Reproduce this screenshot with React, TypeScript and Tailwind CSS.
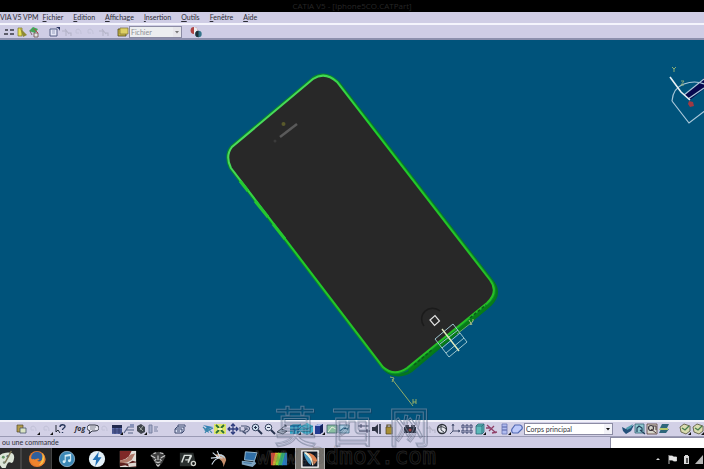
import type { ReactNode } from "react";
import clsx from "clsx";

const MENUS = ["VIA V5 VPM", "Fichier", "Edition", "Affichage", "Insertion", "Outils", "Fenêtre", "Aide"];

// 12x12 toolbar glyphs
const GLYPHS: Record<string, ReactNode> = {
  Measure: <path d="M1 4h3M6 4h4M0 8h4M6 8h4" stroke="#3a3a44" strokeWidth="1.4" />,
  Ruler: (
    <>
      <path d="M2 2h4v8H2z" fill="#e6df55" stroke="#77722a" strokeWidth=".7" />
      <path d="M4 2l7 7-4 2z" fill="#8f8a34" />
    </>
  ),
  Catalogue: (
    <>
      <path d="M1 5l4-4 5 2-3 4z" fill="#45a456" />
      <path d="M2 5l2 4M6 7h4v4H6z" stroke="#6d4c4c" fill="#e3e6e1" strokeWidth=".8" />
      <path d="M6 3l4 4" stroke="#b8474a" />
    </>
  ),
  Sketch: (
    <>
      <path d="M2 3h7v7H2z" fill="#e3e6f5" stroke="#545f85" />
      <path d="M4 5h3M4 7h3" stroke="#9aa2c0" />
      <path d="M8 1h4v4l-1-2z" fill="#26315e" />
    </>
  ),
  Ghost: <path d="M2 5h4v5M5 3l4 5M8 7h3v3" stroke="#b4b4c8" strokeWidth="1.1" fill="none" />,
  Faint: <path d="M3 4c3-2 5 0 5 4M3 4v3h3" stroke="#c2c2d8" fill="none" />,
  Folder: (
    <>
      <path d="M1 3h8v7H1z" fill="#c5b545" stroke="#514a22" strokeWidth=".8" />
      <path d="M3 2h8v6H3z" fill="#ddcf65" stroke="#7c7134" strokeWidth=".7" />
    </>
  ),
  Balls: (
    <>
      <circle cx="4" cy="4.500" r="3.400" fill="#af4342" />
      <path d="M4 1.100a3.400 3.400 0 0 1 0 6.800z" fill="#eceef0" />
      <circle cx="8.500" cy="8" r="3.200" fill="#347489" />
      <path d="M8.500 4.800a3.200 3.200 0 0 0 0 6.400z" fill="#1d3038" />
    </>
  ),
  Paste: (
    <>
      <path d="M2 2h6v7H2z" fill="#b39b4c" stroke="#544b2c" strokeWidth=".7" />
      <path d="M5 5h6v5H5z" fill="#d9e3c4" stroke="#49566c" strokeWidth=".8" />
    </>
  ),
  Help: (
    <>
      <path d="M2 2v7l2-2 2 3" stroke="#222733" fill="none" />
      <path d="M6 4c0-3 5-3 5-.5C11 5 8.500 5 8.500 7M8.500 9v1" stroke="#253559" fill="none" strokeWidth="1.400" />
    </>
  ),
  Bubble: (
    <>
      <path d="M2 2h6q4 0 4 3t-5 3H5l-3 3 1-3Q0 7 0 5t2-3z" fill="#e8e8f2" stroke="#333745" />
      <path d="M3 4h6M3 6h5" stroke="#6a6e7c" strokeWidth=".8" />
    </>
  ),
  Table: (
    <>
      <path d="M1 2h10v9H1z" fill="#5a68a4" />
      <path d="M1 2h10v3H1z" fill="#20294e" />
      <path d="M1 7h10M1 9h10M4 5v6M8 5v6" stroke="#2b3563" strokeWidth=".7" />
    </>
  ),
  Tree: (
    <>
      <path d="M1 10l4-6h6M3 7h8M5 10h5" stroke="#5b6688" fill="none" strokeWidth="1.200" />
      <path d="M7 1h4v3H7z" fill="#8792b9" />
    </>
  ),
  Knot: (
    <>
      <path d="M2 3l4-2 4 3v5l-4 2-4-3z" fill="#3f444b" />
      <path d="M4 4l4 4M8 3L5 7" stroke="#b4bbb6" strokeWidth=".8" />
    </>
  ),
  Lines: <path d="M2 2h3v8H2zM7 4h4M7 6h3M7 8h4" fill="#a9afcb" stroke="#737b9c" strokeWidth=".9" />,
  Box: <path d="M1 6l2-2h7v4l-2 2H1zM1 6h7v4M4 4V2h7v2M3 8h3" fill="#d6dcf0" stroke="#3d496f" />,
  Fly: (
    <>
      <path d="M1 2l10 2-4 2zM2 7l3-3 2 6" fill="#3482b5" />
      <path d="M1 4l4 4 6-3M3 10l3-5 4 5" stroke="#3a87ab" fill="none" strokeWidth="1.200" />
    </>
  ),
  FitAll: (
    <>
      <path d="M0 1h12v10H0z" fill="#dce66a" />
      <path d="M2 2l3 3M10 2L7 5M2 10l3-3M10 10L7 7" stroke="#2b6e38" strokeWidth="1.800" />
      <path d="M4 5h4v2H4z" fill="#edf2a8" />
    </>
  ),
  Pan: <path d="M6 1v10M1 6h10M4 3l2-2 2 2M4 9l2 2 2-2M3 4L1 6l2 2M9 4l2 2-2 2" stroke="#2d3c7d" fill="none" strokeWidth="1.300" />,
  Rotate: <path d="M2 3h5q5 1 3 4t-5 2M7 6L4 9l3 2M1 4v4h3M5 5h3v2" stroke="#495474" fill="none" strokeWidth="1.100" />,
  ZoomIn: (
    <>
      <circle cx="4.500" cy="4.500" r="3.300" fill="#cfe2f0" stroke="#33405d" />
      <path d="M7 7l4 4" stroke="#26314e" strokeWidth="2" />
      <path d="M3 4.500h3M4.500 3v3" stroke="#26314e" />
    </>
  ),
  ZoomOut: (
    <>
      <circle cx="4.500" cy="4.500" r="3.300" fill="#e0e8f3" stroke="#33405d" />
      <path d="M7 7l4 4" stroke="#26314e" strokeWidth="2" />
      <path d="M3 4.500h3" stroke="#26314e" />
    </>
  ),
  Normal: <path d="M1 9l4-3 6 2-4 3zM5 6l5-4M8 2h2v2" fill="#9ca6b9" stroke="#4d5566" />,
  Views: (
    <>
      <path d="M1 3l3-2h8v7l-3 3H1z" fill="#30aaca" />
      <path d="M1 3h8v8M9 3l3-2M1 7h8l3-3M5 3v8" stroke="#15508a" fill="none" strokeWidth=".9" />
    </>
  ),
  Iso: (
    <>
      <path d="M6 0l6 3v6l-6 3-6-3V3z" fill="#45b2cc" />
      <path d="M0 3l6 3 6-3M6 6v6M3 5v6M9 5v6" stroke="#28678c" fill="none" strokeWidth=".8" />
    </>
  ),
  Shaded: (
    <>
      <path d="M2 3l3-2h5v8l-3 2H2z" fill="#243b91" />
      <path d="M2 3l3-2h5L7 3z" fill="#a4b6e7" />
      <path d="M7 3l3-2v8l-3 2z" fill="#14225c" />
    </>
  ),
  Hide: (
    <>
      <path d="M1 2h10v8H1z" fill="#8abfa2" stroke="#3f6370" strokeWidth=".8" />
      <path d="M2 9l4-5 4 2" stroke="#e6eddb" fill="none" />
    </>
  ),
  Swap: (
    <>
      <path d="M1 2h10v8H1z" fill="#a9cce2" stroke="#386581" strokeWidth=".8" />
      <path d="M2 8l4-3 4 1" stroke="#246183" fill="none" strokeWidth="1.400" />
    </>
  ),
  Axis: <path d="M0 3h11M1 8h11M3 1v4M9 6v4" stroke="#454b68" />,
  Speaker: (
    <>
      <path d="M1 4h3l3-3v10L4 8H1z" fill="#303545" />
      <path d="M8 1h2v10H8z" fill="#4e5468" />
    </>
  ),
  Lock: (
    <>
      <path d="M4 5V2h4v3" fill="none" stroke="#564c27" strokeWidth="1.200" />
      <path d="M3 4h6v7H3z" fill="#a88f35" stroke="#514420" strokeWidth=".7" />
    </>
  ),
  Camera: (
    <>
      <path d="M0 4h12v6H0z" fill="#2f3342" />
      <path d="M1 2h4v2H1zM7 2h4v2H7z" fill="#4d5060" />
      <circle cx="6" cy="7" r="1.500" fill="#9e4242" />
    </>
  ),
  Clock: (
    <>
      <circle cx="6" cy="6" r="4.500" fill="#e5e7ee" stroke="#2b2f38" strokeWidth="1.300" />
      <path d="M2 5q4-3 8 1M5 2v5l3 2" stroke="#2b2f38" fill="none" strokeWidth=".9" />
    </>
  ),
  Frame: <path d="M4 1v7h7M4 8l-3 3M3 3l1-2 1 2M9 7l2 1-2 1" stroke="#4a5372" fill="none" />,
  Digits: <path d="M1 2h2v3H1zM5 2h2v3H5zM9 2h2v3H9zM1 7h2v3H1zM5 7h2v3H5zM9 7h2v3H9z" stroke="#3d4770" fill="none" />,
  Solid: (
    <>
      <path d="M2 3l2-2h6v8l-2 2H2z" fill="#5bb9b9" stroke="#286573" strokeWidth=".8" />
      <path d="M2 3h6v8M8 3l2-2" stroke="#286573" fill="none" strokeWidth=".8" />
    </>
  ),
  Cut: <path d="M1 2l9 8M3 8l5-5M0 5h5M6 10l5-1" stroke="#8f4068" fill="none" strokeWidth="1.300" />,
  Stack: <path d="M3 1h5v3H3zM3 4h5v3H3zM3 7h5v4H3z" fill="#b1bcf0" stroke="#6874b3" strokeWidth=".8" />,
  Plane: <path d="M4 2h5q3 1 2 4L7 10H2Q0 9 1 6z" fill="#bdc9fa" stroke="#5068b2" strokeWidth="1.200" />,
  Layer: (
    <>
      <path d="M0 4l4 2 8-4-3 6-5 3-3-3z" fill="#22507a" />
      <path d="M4 5l7-4-2 4-4 2z" fill="#519caf" />
    </>
  ),
  Find: (
    <>
      <path d="M1 1h9v9H1z" fill="#8fc7cf" stroke="#365f73" strokeWidth=".8" />
      <path d="M3 9V5l2-2 3 2v4M6 7l5 4" stroke="#22405c" fill="none" strokeWidth="1.200" />
    </>
  ),
  Gear: (
    <>
      <path d="M1 1h10v10H1z" fill="#d6d5cb" stroke="#583c3b" strokeWidth=".8" />
      <circle cx="5" cy="5" r="2.500" fill="none" stroke="#3c363e" strokeWidth="1.200" />
      <path d="M5 6l5 4M7 3h3v4" stroke="#4d3b3e" fill="none" />
    </>
  ),
  Slab: (
    <>
      <path d="M4 1h7L9 5H2zM3 6h8l-3 4H1z" fill="#2e667b" />
      <path d="M2 5h8v2H1z" fill="#b6c66b" />
    </>
  ),
  Part: (
    <>
      <path d="M1 4l4-3 6 2v5l-4 3-5-2z" fill="#d9dcaf" stroke="#605f46" strokeWidth=".9" />
      <path d="M3 5l3 2 4-4" stroke="#477d4c" strokeWidth="1.300" fill="none" />
    </>
  ),
};

function Tool({ name, more }: { name: string; more?: boolean }) {
  return (
    <button type="button" aria-label={name} className="block h-3 w-3 shrink-0">
      <svg viewBox="0 0 12 12" className="h-3 w-3" fill="none">
        {GLYPHS[name]}
        {more && <path d="M9 12h3V9z" fill="#111" />}
      </svg>
    </button>
  );
}

function ToolGroup({ names, more = [], className }: { names: string[]; more?: number[]; className?: string }) {
  return (
    <div className={clsx("flex shrink-0 items-center justify-between", className)}>
      {names.map((n, i) => (
        <Tool key={i} name={n} more={more.includes(i)} />
      ))}
    </div>
  );
}

function DropDown({ label, value, className, muted }: { label: string; value: string; className?: string; muted?: boolean }) {
  return (
    <div className={clsx("relative shrink-0", className)}>
      <select
        aria-label={label}
        className={clsx(
          "block h-3 w-full appearance-none border border-[#8c8ca4] pl-px text-[7px] leading-[10px]",
          muted ? "bg-[#eceef0] text-[#8c8e94]" : "bg-white text-[#34343c]",
        )}
      >
        <option>{value}</option>
      </select>
      <svg viewBox="0 0 8 10" className="pointer-events-none absolute right-px top-px h-2.5 w-2">
        <path d="M0 0h8v10H0z" fill={muted ? "#e6e6ea" : "#f2f2f8"} />
        <path d="M2 4h4L4 6.500z" fill={muted ? "#777" : "#111"} />
      </svg>
    </div>
  );
}

const PHONE = "M232 147L313 79Q325 71 337 82L490 280Q499 292 487 303L407 368Q394 377 383 367L231 168Q225 156 232 147Z";

function Viewport() {
  return (
    <svg viewBox="0 40 704 380" preserveAspectRatio="xMidYMid slice" className="absolute inset-0 h-full w-full" fill="none">
      <defs>
        <linearGradient id="edge" x1="230" y1="100" x2="490" y2="340" gradientUnits="userSpaceOnUse">
          <stop offset="0" stopColor="#5be070" />
          <stop offset=".35" stopColor="#20cf2a" />
          <stop offset="1" stopColor="#27bd24" />
        </linearGradient>
      </defs>

      {/* phone body */}
      <path d="M338 82L492 281Q502 293 490 305L411 371Q396 380 384 369" stroke="#04761f" strokeWidth="3" />
      <path d="M491 282Q499 295 487 306L408 370" stroke="#087c18" strokeWidth="5" />
      <path d={PHONE} stroke="#0b8a2b" strokeWidth="4" />
      <path d={PHONE} fill="#282828" stroke="url(#edge)" strokeWidth="2" />
      <path d="M240 181l8 10M255 201l13 16M273 224l12 15" stroke="#25c731" strokeWidth="3" />
      <path d="M414 365l18-15M470 318l16-13" stroke="#0a5a19" strokeWidth="1.500" strokeDasharray="3 2" />

      {/* earpiece and sensors */}
      <path d="M280 137l17-13" stroke="#5a5a5a" strokeWidth="2.500" />
      <circle cx="283.500" cy="124" r="2" fill="#59592b" />
      <circle cx="275" cy="141" r="1.500" fill="#3b3b3b" />

      {/* home button */}
      <path d="M424 326a11 11 0 0 1 16-15" stroke="#1b1b1b" strokeWidth="1.500" />
      <path d="M430 320l5-4.500 4.500 5.500-5 4.500z" stroke="#e2e2e2" strokeWidth="1.200" />

      {/* sketch planes */}
      <path d="M435 339l18-15 14 18-18 15zM442 348l18-15M440 344l18-14M446 353l18-15" stroke="#9cc5cf" />
      <path d="M442 329l17 22" stroke="#e2edc1" strokeWidth="1.400" />
      <path d="M457 334l14-11" stroke="#6fa76f" />
      <path d="M469 320l3 5M470 325l3-4M472 320h2" stroke="#a9bc87" />
      <path d="M392 379l21 27M390 377l4 1-2 4M413 399v5M416 399v5M413 402h3" stroke="#a3b765" strokeWidth=".9" />

      {/* compass */}
      <path d="M684 95L704 78V89L690 100Z" fill="#07094e" />
      <path d="M672 101Q673 88 684 84T704 84M672 101L689 123L706 110M684 95L704 79M688 99L704 88" stroke="#a9c8da" strokeWidth="1.200" />
      <path d="M670 77l11 15 9 8" stroke="#e9f1f4" strokeWidth="1.600" />
      <path d="M689 101l4 1 1 4-4 1-2-3z" fill="#a03943" />
      <path d="M672 67l2 2 2-2M674 69v3" stroke="#9bb874" strokeWidth=".9" />
      <path d="M681 81h3l-3 4h3" stroke="#8dac7b" strokeWidth=".9" />
    </svg>
  );
}

// 20x20 taskbar drawings
const APPS: { name: string; art: ReactNode; state?: "open" | "active" }[] = [
  {
    name: "Paint",
    state: "open",
    art: (
      <>
        <path d="M1 13Q0 4 10 3t9 6-4 5-5 5-9-6z" fill="#dce5d8" />
        <circle cx="7" cy="8" r="1.600" fill="#609264" />
        <circle cx="12" cy="7" r="1.500" fill="#60727d" />
        <circle cx="8" cy="14" r="1.500" fill="#7c8a78" />
        <path d="M16 1L9 14" stroke="#7d7654" strokeWidth="1.500" />
      </>
    ),
  },
  {
    name: "Firefox",
    state: "open",
    art: (
      <>
        <circle cx="10" cy="10" r="9" fill="#e4782b" />
        <circle cx="10" cy="8.500" r="6.500" fill="#2e5f9d" />
        <path d="M2 6q1 5 4 4 1 1 3 0 2-1 4 0-1 2-3 2 4 2 6-2 2-5 0-7 6 6 2 12-5 5-11 2-6-4-5-11z" fill="#ee842d" />
        <path d="M16 3q4 6 0 12-2 2-4 2 5-5 4-14z" fill="#f6c14b" />
      </>
    ),
  },
  {
    name: "iTunes",
    art: (
      <>
        <circle cx="10" cy="10" r="8.500" fill="#3b87b5" stroke="#8cabc1" />
        <path d="M8 13V6l6-1v7M8 7l6-1" stroke="#d4edf7" strokeWidth="1.200" fill="none" />
        <circle cx="6.700" cy="13" r="1.600" fill="#d4edf7" />
        <circle cx="12.700" cy="12" r="1.600" fill="#d4edf7" />
      </>
    ),
  },
  {
    name: "Daemon Tools",
    art: (
      <>
        <circle cx="10" cy="10" r="9" fill="#e3f0f7" />
        <path d="M12 2L5 11h4l-1 7 7-10h-4z" fill="#2371b5" />
      </>
    ),
  },
  {
    name: "Red picture",
    art: (
      <>
        <path d="M1 1h18v18H1z" fill="#e2ded8" />
        <path d="M1 1h13l-3 6-4 3-6 2z" fill="#7f2927" />
        <path d="M1 12l7-2 5-5 5-1-4 7-5 3-8 1z" fill="#b07a6a" />
        <path d="M1 14l9 1 5-3 4 1v6h-7l-5-2-6 1z" fill="#5e2220" />
        <path d="M10 15l9-1v4l-8 1z" fill="#dcd6d0" />
      </>
    ),
  },
  {
    name: "Mask",
    art: (
      <>
        <path d="M2 5l4-2 5-1 6 3 1 3-3 6-4 5-4-4-3-5z" fill="#3e3e3e" />
        <path d="M2 6l5 3M18 6l-5 3M7 13l3 1 3-1M8 16l2 2 2-2M5 4l3-1M12 3l4 1M8 10l-2 2M12 10l2 2M10 6v5" stroke="#c9c9c9" strokeWidth="1.300" fill="none" />
      </>
    ),
  },
  {
    name: "Converter",
    art: (
      <>
        <path d="M1 3h15l2 9-4 6H1z" fill="#2b302f" />
        <path d="M3 14L6 6h7l-2 5H7M10 14l4-8" stroke="#dde2df" strokeWidth="1.600" fill="none" />
        <circle cx="16" cy="15" r="2.300" fill="none" stroke="#d2d5ce" strokeWidth="1.500" />
      </>
    ),
  },
  {
    name: "Swoosh",
    art: (
      <>
        <path d="M6 5Q17 3 18 11l-3 8q0-8-8-11z" fill="#c58f6c" />
        <path d="M8 5q8-1 9 5-3-3-9-5z" fill="#b5d4e8" />
        <path d="M2 16q5-9 12-7M3 3l7 6M8 1l3 7M1 9l9-1" stroke="#d5e2ee" strokeWidth="1.200" fill="none" />
      </>
    ),
  },
  {
    name: "Computer",
    art: (
      <>
        <path d="M6 2l13 1-3 9-11-1z" fill="#2f6fa8" stroke="#9fc3da" />
        <path d="M2 12l12 1 2-1 2 3-4 4-12-3z" fill="#7fa4c0" />
        <path d="M4 14l9 1M8 4l8 1" stroke="#386f9f" />
      </>
    ),
  },
  {
    name: "Spectrum",
    art: (
      <>
        <path d="M1 3h6L4 17H1z" fill="#d44937" />
        <path d="M6 3h4L6 17H3z" fill="#ddb82d" />
        <path d="M9 3h5l-4 14H6z" fill="#83d636" />
        <path d="M13 3h5l-4 14H9z" fill="#2db475" />
        <path d="M17 3h2v14h-6z" fill="#2878c1" />
      </>
    ),
  },
  {
    name: "CATIA",
    state: "active",
    art: (
      <>
        <path d="M1 1h18v18H1z" fill="#0d1420" />
        <path d="M3 3q8 0 9 6l-1 8Q4 11 3 3z" fill="#4f9cc4" />
        <path d="M7 3q9 1 11 9l-4 5Q13 8 7 3z" fill="#dd8250" />
        <path d="M6 3q7 5 7 14-1-8-9-14z" fill="#fbf1d5" stroke="#fbf1d5" />
        <path d="M1 1h18v18H1z" fill="none" stroke="#fff" strokeWidth="1.500" />
      </>
    ),
  },
];

export default function App() {
  return (
    <div className="relative flex min-h-screen flex-col overflow-hidden bg-black font-['Lato','Noto_Sans',sans-serif] text-[7px] text-[#2c2c36]">
      <header className="flex h-3 shrink-0 items-center justify-center bg-black font-['Open_Sans',sans-serif] text-[8px] leading-3 text-[#262626]">
        CATIA V5 - [Iphone5CO.CATPart]
      </header>

      <nav className="flex h-[13px] shrink-0 items-center gap-2.5 border-b-2 border-[#f4f4fc] bg-[#cfcde5]">
        {MENUS.map((m, i) => (
          <button key={m} type="button" className={clsx("whitespace-nowrap leading-[11px]", i === 0 && "-mr-1.5")}>
            {i === 0 ? m : (
              <>
                <span className="underline">{m[0]}</span>
                {m.slice(1)}
              </>
            )}
          </button>
        ))}
      </nav>

      <div className="flex h-[15px] shrink-0 items-center border-b-2 border-[#8d90ad] bg-[#cfcde5]">
        <ToolGroup names={["Measure", "Ruler", "Catalogue"]} className="ml-1 w-9" />
        <ToolGroup names={["Sketch", "Ghost", "Faint", "Faint", "Ghost"]} className="ml-2 w-[61px]" />
        <ToolGroup names={["Folder"]} className="ml-2" />
        <DropDown label="Type" value="Fichier" muted className="w-[53px]" />
        <ToolGroup names={["Balls"]} className="ml-2" />
      </div>

      <main className="relative min-h-[200px] flex-1 bg-[#00537b]">
        <Viewport />
      </main>

      <div className="flex h-[17px] shrink-0 items-center border-b border-t-2 border-b-[#9a9ab4] border-t-[#f2f2fa] bg-[#d2d0e6]">
        <ToolGroup names={["Paste", "Faint", "Faint", "Help"]} more={[1, 2]} className="ml-[15px] w-[51px]" />
        <div className="ml-2 flex w-[84px] shrink-0 items-center justify-between">
          <button type="button" className="w-3 font-['Open_Sans',sans-serif] text-[7px] font-bold italic leading-3">fog</button>
          <ToolGroup names={["Bubble", "Faint", "Table", "Tree", "Knot", "Lines"]} more={[2, 4]} className="w-[71px]" />
        </div>
        <ToolGroup names={["Box"]} className="ml-4" />
        <div className="ml-[8px] h-3 w-px bg-[#b2b2c8]" />
        <ToolGroup
          names={["Fly", "FitAll", "Pan", "Rotate", "ZoomIn", "ZoomOut", "Normal", "Views", "Iso", "Shaded", "Hide", "Swap"]}
          more={[7, 8, 9]}
          className="ml-[8px] w-[148px]"
        />
        <ToolGroup names={["Axis", "Speaker", "Lock"]} className="ml-2 w-[37px]" />
        <ToolGroup names={["Camera"]} className="ml-[9px]" />
        <ToolGroup
          names={["Ghost", "Clock", "Frame", "Digits", "Solid", "Cut", "Stack", "Plane"]}
          more={[4, 6]}
          className="ml-2 w-[99px]"
        />
        <DropDown label="Corps" value="Corps principal" className="ml-px w-[89px]" />
        <ToolGroup names={["Layer", "Find", "Gear", "Slab"]} className="ml-[9px] w-12" />
        <ToolGroup names={["Part", "Part"]} more={[0, 1]} className="ml-[9px] w-[25px]" />
      </div>

      <div className="flex h-[11px] shrink-0 items-stretch bg-[#cfcde5]">
        <p className="flex-1 whitespace-nowrap pl-0.5 leading-[11px]">ou une commande</p>
        <input aria-label="Commande" className="w-[94px] border-l border-t border-[#8c8ca4] bg-white px-0.5" />
      </div>

      <footer className="flex h-[21px] shrink-0 items-center justify-between bg-black">
        <div className="-ml-[9px] grid w-[334px] grid-cols-11">
          {APPS.map((a) => (
            <button
              key={a.name}
              type="button"
              aria-label={a.name}
              className={clsx(
                "flex h-[21px] items-center justify-center",
                a.state === "open" && "border-x border-[#444] bg-[#2b2b2b]",
                a.state === "active" && "border-x border-[#aaa] bg-[#77736e]",
              )}
            >
              <svg viewBox="0 0 20 20" className="h-[18px] w-[18px]">{a.art}</svg>
            </button>
          ))}
        </div>
        <svg viewBox="0 0 52 12" className="h-3 w-[52px]" aria-label="Notification area">
          <path d="M4 7l2-2 2 2z" fill="#ddd" />
          <path d="M17 2v9M17.500 3h3l1 1h3v4h-3l-1-1h-3z" stroke="#e5e5e5" fill="#e5e5e5" strokeWidth=".8" />
          <path d="M32 3h1V2h3v1h1v8h-5z" fill="#d9d9d9" />
          <path d="M34 5h2v5h-2z" fill="#555" />
          <path d="M51 2v9h-8z" fill="#b4b4b4" />
        </svg>
      </footer>

      {/* embossed watermark */}
      <div className="pointer-events-none absolute inset-x-0 bottom-0 flex flex-col items-center gap-px pb-0.5">
        <div className="flex gap-[15px] font-['Noto_Sans_CJK_SC',sans-serif] text-[42px] leading-[42px] text-transparent drop-shadow-[1px_1px_0_#20284080] [-webkit-text-stroke:1px_#8795ab99]">
          <span>莫</span>
          <span>西</span>
          <span>网</span>
        </div>
        <div className="pr-3 font-['DejaVu_Sans_Mono',monospace] text-[23px] leading-[21px] text-transparent [-webkit-text-stroke:1px_#5c5c5c59]">
          www.3dmox.com
        </div>
      </div>
    </div>
  );
}
